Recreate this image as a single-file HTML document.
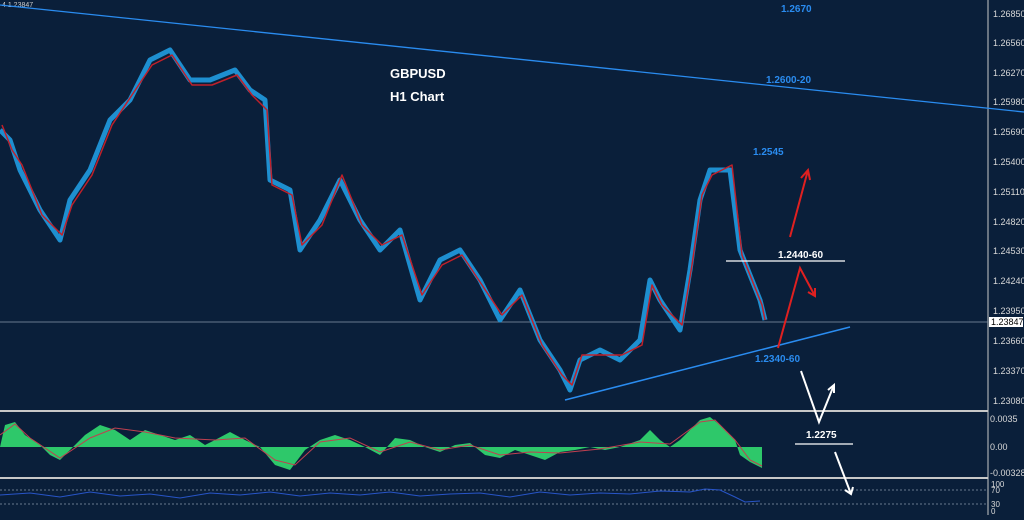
<!DOCTYPE html><html><head><style>body{margin:0;background:#0a1f3a;width:1024px;height:515px;overflow:hidden;font-family:"Liberation Sans",sans-serif}</style></head><body>
<svg width="1024" height="515" xmlns="http://www.w3.org/2000/svg" font-family="Liberation Sans, sans-serif">
<rect width="1024" height="515" fill="#0a1f3a"/>
<line x1="988" y1="0" x2="988" y2="515" stroke="#c8c8c8"/>
<g fill="#d8d8d8" font-size="9">
<text x="993" y="17">1.26850</text><text x="993" y="46">1.26560</text><text x="993" y="76">1.26270</text><text x="993" y="105">1.25980</text><text x="993" y="135">1.25690</text><text x="993" y="165">1.25400</text><text x="993" y="195">1.25110</text><text x="993" y="225">1.24820</text><text x="993" y="254">1.24530</text><text x="993" y="284">1.24240</text><text x="993" y="314">1.23950</text><text x="993" y="344">1.23660</text><text x="993" y="374">1.23370</text><text x="993" y="404">1.23080</text>
<text x="990" y="422">0.0035</text><text x="990" y="450">0.00</text><text x="990" y="476">-0.003286</text>
<text x="991" y="487" font-size="8">100</text><text x="991" y="493" font-size="8">70</text><text x="991" y="507" font-size="8">30</text><text x="991" y="514" font-size="8">0</text>
</g>
<rect x="989" y="317" width="34" height="10" fill="#fff"/><text x="991" y="325" font-size="9" fill="#000">1.23847</text>
<line x1="0" y1="322" x2="988" y2="322" stroke="#8899aa" stroke-width="0.8"/>
<text x="2" y="7" font-size="7" fill="#ccc">4 1.23847</text>
<line x1="0" y1="5" x2="1024" y2="112" stroke="#2a8cf0" stroke-width="1.3"/>
<line x1="565" y1="400" x2="850" y2="327" stroke="#2a8cf0" stroke-width="1.5"/>
<g fill="none" stroke-linejoin="round">
<polyline stroke="#1e8fd0" stroke-width="5" points="0,130 10,140 20,170 40,210 60,240 70,200 90,170 110,120 130,100 150,60 170,50 190,80 210,80 235,70 250,90 265,100 270,180 290,190 300,250 320,220 340,180 360,220 380,250 400,230 420,300 440,260 460,250 480,280 500,320 520,290 540,340 560,370 570,390 580,360 600,350 620,360 640,340 650,280 660,300 680,330 690,270 700,200 710,170 730,170 740,250 760,300 765,320"/>
<polyline stroke="#c0202a" stroke-width="1.5" points="2,125 12,150 22,165 42,215 62,235 72,205 92,175 112,125 132,95 152,65 172,55 192,85 212,85 237,75 252,95 267,110 272,185 292,195 302,245 322,225 342,175 362,225 382,245 402,235 422,295 442,265 462,255 482,285 502,315 522,295 542,345 562,375 572,385 582,355 602,355 622,355 642,345 652,285 662,305 682,325 692,265 702,195 712,175 732,165 742,255 762,305 765,320"/>
</g>
<line x1="0" y1="411" x2="988" y2="411" stroke="#c8c8c8" stroke-width="2"/>
<line x1="0" y1="478" x2="988" y2="478" stroke="#c8c8c8" stroke-width="2"/>
<path fill="#2ec86a" d="M0,447 L5,425 15,422 25,435 40,445 50,455 60,460 70,450 85,435 100,425 115,430 130,440 145,430 160,435 175,440 190,435 205,445 215,440 230,432 245,440 260,447 275,465 290,470 305,450 320,440 335,435 350,440 365,447 380,455 395,438 410,440 425,447 440,452 455,445 470,443 485,455 500,458 515,450 530,455 545,460 560,452 575,450 590,447 605,450 620,447 640,440 650,430 660,440 670,447 680,440 690,430 700,420 710,417 720,425 735,440 740,455 750,462 762,468 762,447 Z"/>
<polyline fill="none" stroke="#c04050" stroke-width="1" points="0,435 15,424 30,438 60,458 90,438 115,428 145,432 175,438 215,440 245,438 275,460 295,465 320,442 350,438 380,452 410,442 440,450 470,445 500,455 530,452 560,453 600,449 640,442 670,444 700,422 715,420 735,440 750,460 762,466"/>
<line x1="0" y1="490" x2="988" y2="490" stroke="#8899aa" stroke-dasharray="2,2" stroke-width="0.7"/>
<line x1="0" y1="504" x2="988" y2="504" stroke="#8899aa" stroke-dasharray="2,2" stroke-width="0.7"/>
<polyline fill="none" stroke="#2855c8" stroke-width="1" points="0,495 30,493 60,497 90,492 120,496 150,494 180,498 210,493 240,495 270,492 300,496 330,493 360,495 390,492 420,496 450,494 480,493 510,497 540,492 570,495 600,493 630,494 660,491 690,492 705,489 720,490 735,497 745,502 760,501"/>
<g font-weight="bold" font-size="13" fill="#fff"><text x="390" y="78">GBPUSD</text><text x="390" y="101">H1 Chart</text></g>
<g font-weight="bold" font-size="10" fill="#2a8cf0"><text x="781" y="12">1.2670</text><text x="766" y="83">1.2600-20</text><text x="753" y="155">1.2545</text><text x="755" y="362">1.2340-60</text></g>
<g font-weight="bold" font-size="10" fill="#fff"><text x="778" y="258">1.2440-60</text><text x="806" y="438">1.2275</text></g>
<line x1="726" y1="261" x2="845" y2="261" stroke="#fff" stroke-width="1.3"/>
<line x1="795" y1="444" x2="853" y2="444" stroke="#fff" stroke-width="1.3"/>
<g stroke="#e02020" stroke-width="2" fill="none"><path d="M790,237 L808,170 M801,178 L808,170 L810,180"/><path d="M778,348 L800,268 L815,296 M808,292 L815,296 L815,288"/></g>
<g stroke="#fff" stroke-width="2" fill="none"><path d="M801,371 L819,422 L834,385 M828,390 L834,385 L834,393"/><path d="M835,452 L851,494 M845,490 L851,494 L853,487"/></g>
</svg></body></html>
